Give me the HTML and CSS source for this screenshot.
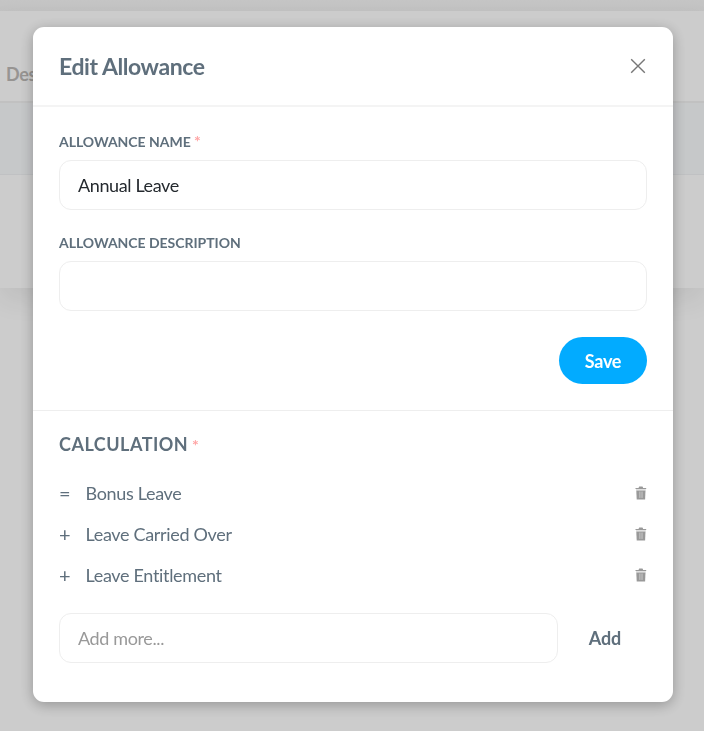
FILE: index.html
```html
<!DOCTYPE html>
<html lang="en">
<head>
  <meta charset="UTF-8" />
  <title>Edit Allowance</title>
  <link rel="stylesheet" href="styles.css">
</head>
<body>

  <div class="page">
    <div class="table-panel">
      <div class="table-head">Des</div>
      <div class="table-row selected"></div>
      <div class="table-row"></div>
    </div>
  </div>

  <div class="overlay">
    <div class="modal" role="dialog" aria-labelledby="modalTitle">
      <div class="modal-header">
        <h1 id="modalTitle">Edit Allowance</h1>
        <button class="close-btn" aria-label="Close">
          <svg width="16" height="16" viewBox="0 0 16 16"><path d="M1.2 1.2 14.8 14.8M14.8 1.2 1.2 14.8" /></svg>
        </button>
      </div>

      <form class="allowance-form">
        <label class="field-label" for="nameInput">Allowance Name <span class="required">*</span></label>
        <input class="field" type="text" id="nameInput" value="Annual Leave" />
        <label class="field-label" for="descriptionInput">Allowance Description</label>
        <input class="field" type="text" id="descriptionInput" />
        <button class="save-btn" type="button">Save</button>
      </form>

      <div class="calculation">
        <h2>Calculation <span class="required">*</span></h2>
        <ul class="calc-list">
          <li>
            <span class="operator">=</span>
            <span class="calc-name">Bonus Leave</span>
            <svg class="trash" width="12" height="14" viewBox="0 0 12 14"><path class="lid" d="M.5 2h3L4.2.6h3.3L8.2 2h3v1.1H.5z" /><path class="rim" d="M1 3.1h9.8v1.3H1z" /><path class="bin" d="M1.3 4.4h9.2l-.4 9H1.7z" /><path class="ribs" d="M4.9 5.5v6.4M7 5.5v6.4" /></svg>
          </li>
          <li>
            <span class="operator">+</span>
            <span class="calc-name">Leave Carried Over</span>
            <svg class="trash" width="12" height="14" viewBox="0 0 12 14"><path class="lid" d="M.5 2h3L4.2.6h3.3L8.2 2h3v1.1H.5z" /><path class="rim" d="M1 3.1h9.8v1.3H1z" /><path class="bin" d="M1.3 4.4h9.2l-.4 9H1.7z" /><path class="ribs" d="M4.9 5.5v6.4M7 5.5v6.4" /></svg>
          </li>
          <li>
            <span class="operator">+</span>
            <span class="calc-name">Leave Entitlement</span>
            <svg class="trash" width="12" height="14" viewBox="0 0 12 14"><path class="lid" d="M.5 2h3L4.2.6h3.3L8.2 2h3v1.1H.5z" /><path class="rim" d="M1 3.1h9.8v1.3H1z" /><path class="bin" d="M1.3 4.4h9.2l-.4 9H1.7z" /><path class="ribs" d="M4.9 5.5v6.4M7 5.5v6.4" /></svg>
          </li>
        </ul>
        <div class="add-row">
          <input class="field" type="text" placeholder="Add more..." />
          <button class="add-btn">Add</button>
        </div>
      </div>
    </div>
  </div>

</body>
</html>
```
FILE: styles.css
```css
* {
  box-sizing: border-box;
}

body {
  margin: 0;
  height: 731px;
  overflow: hidden;
  font-family: Lato, "Liberation Sans", sans-serif;
  font-size: 18px;
  letter-spacing: -0.33px;
  color: #5f6f7c;
  background: #fff;
}

button {
  font-family: inherit;
  border: none;
  cursor: pointer;
}

/* Page behind the dialog */
.page {
  height: 731px;
  padding-top: 11px;
  background: linear-gradient(#f7f7f7, #f3f3f3 11px, #fff 11px);
}

.table-panel {
  height: 277px;
  background: #fff;
  box-shadow: 0 12px 25px rgba(0, 0, 0, 0.07);
}

.table-head {
  height: 92px;
  padding: 51px 6px 0;
  font-weight: bold;
  line-height: 24px;
  color: #bdbab7;
  border-bottom: 2px solid #f2f2f2;
}

.table-row {
  height: 72px;
}

.table-row.selected {
  background: #f8fafc;
  border-bottom: 1px solid #f0f2f4;
}

.overlay {
  position: fixed;
  inset: 0;
  padding: 27px 31px 0 33px;
  background: rgba(0, 0, 0, 0.2);
}

/* Dialog */
.modal {
  height: 675px;
  background: #fff;
  border-radius: 11px;
  box-shadow: 0 3px 14px rgba(0, 0, 0, 0.28);
}

.modal-header {
  display: flex;
  align-items: center;
  justify-content: space-between;
  height: 80px;
  padding: 0 26px;
  border-bottom: 2px solid #f4f4f4;
}

h1 {
  margin: 0;
  font-size: 23px;
  line-height: 28px;
  letter-spacing: -0.43px;
}

.close-btn {
  display: flex;
  padding: 0;
  margin-right: 1px;
  background: none;
}

.close-btn svg {
  fill: none;
  stroke: #777;
  stroke-width: 1.4;
}

.allowance-form {
  display: flex;
  flex-direction: column;
  height: 304px;
  padding: 25px 26px 0;
  border-bottom: 1px solid #eee;
}

.field-label {
  height: 28px;
  font-size: 14px;
  font-weight: bold;
  line-height: 20px;
  letter-spacing: -0.03px;
  text-transform: uppercase;
}

.required {
  font-weight: bold;
  color: #ffa5a5;
}

.field-label .required {
  font-size: 16px;
  line-height: 1;
}

.field {
  width: 100%;
  height: 50px;
  padding: 0 18px;
  font-family: inherit;
  font-size: 18px;
  letter-spacing: -0.38px;
  color: #24292e;
  background: #fff;
  border: 1px solid #eee;
  border-radius: 12px;
  outline: none;
}

.field::placeholder {
  color: #999;
}

.allowance-form .field {
  margin-bottom: 23px;
}

.save-btn {
  align-self: flex-end;
  width: 88px;
  height: 47px;
  margin-top: 3px;
  font-size: 18px;
  font-weight: bold;
  letter-spacing: -0.3px;
  color: #fff;
  background: #02abff;
  border-radius: 24px;
}

.calculation {
  padding: 21px 26px 0;
}

h2 {
  margin: 0 0 15px;
  font-size: 18px;
  line-height: 24px;
  letter-spacing: 0.5px;
  text-transform: uppercase;
}

h2 .required {
  margin-left: -1px;
  font-size: 16px;
}

.calc-list {
  margin: 0;
  padding: 0;
  list-style: none;
}

.calc-list li {
  display: flex;
  align-items: center;
  height: 41.4px;
}

.operator {
  width: 26.5px;
  font-size: 20px;
  line-height: 22px;
}

.calc-name {
  flex: 1;
}

.lid,
.bin {
  fill: #999;
}

.rim {
  fill: #ddd;
}

.ribs {
  stroke: #d0d0d0;
  stroke-width: 0.9;
}

.add-row {
  display: flex;
  margin-top: 17px;
}

.add-row .field {
  width: 499px;
}

.add-btn {
  flex: 1;
  padding: 0;
  padding-left: 5px;
  font-size: 18px;
  font-weight: bold;
  letter-spacing: -0.1px;
  color: #5f6f7c;
  background: none;
}
```
